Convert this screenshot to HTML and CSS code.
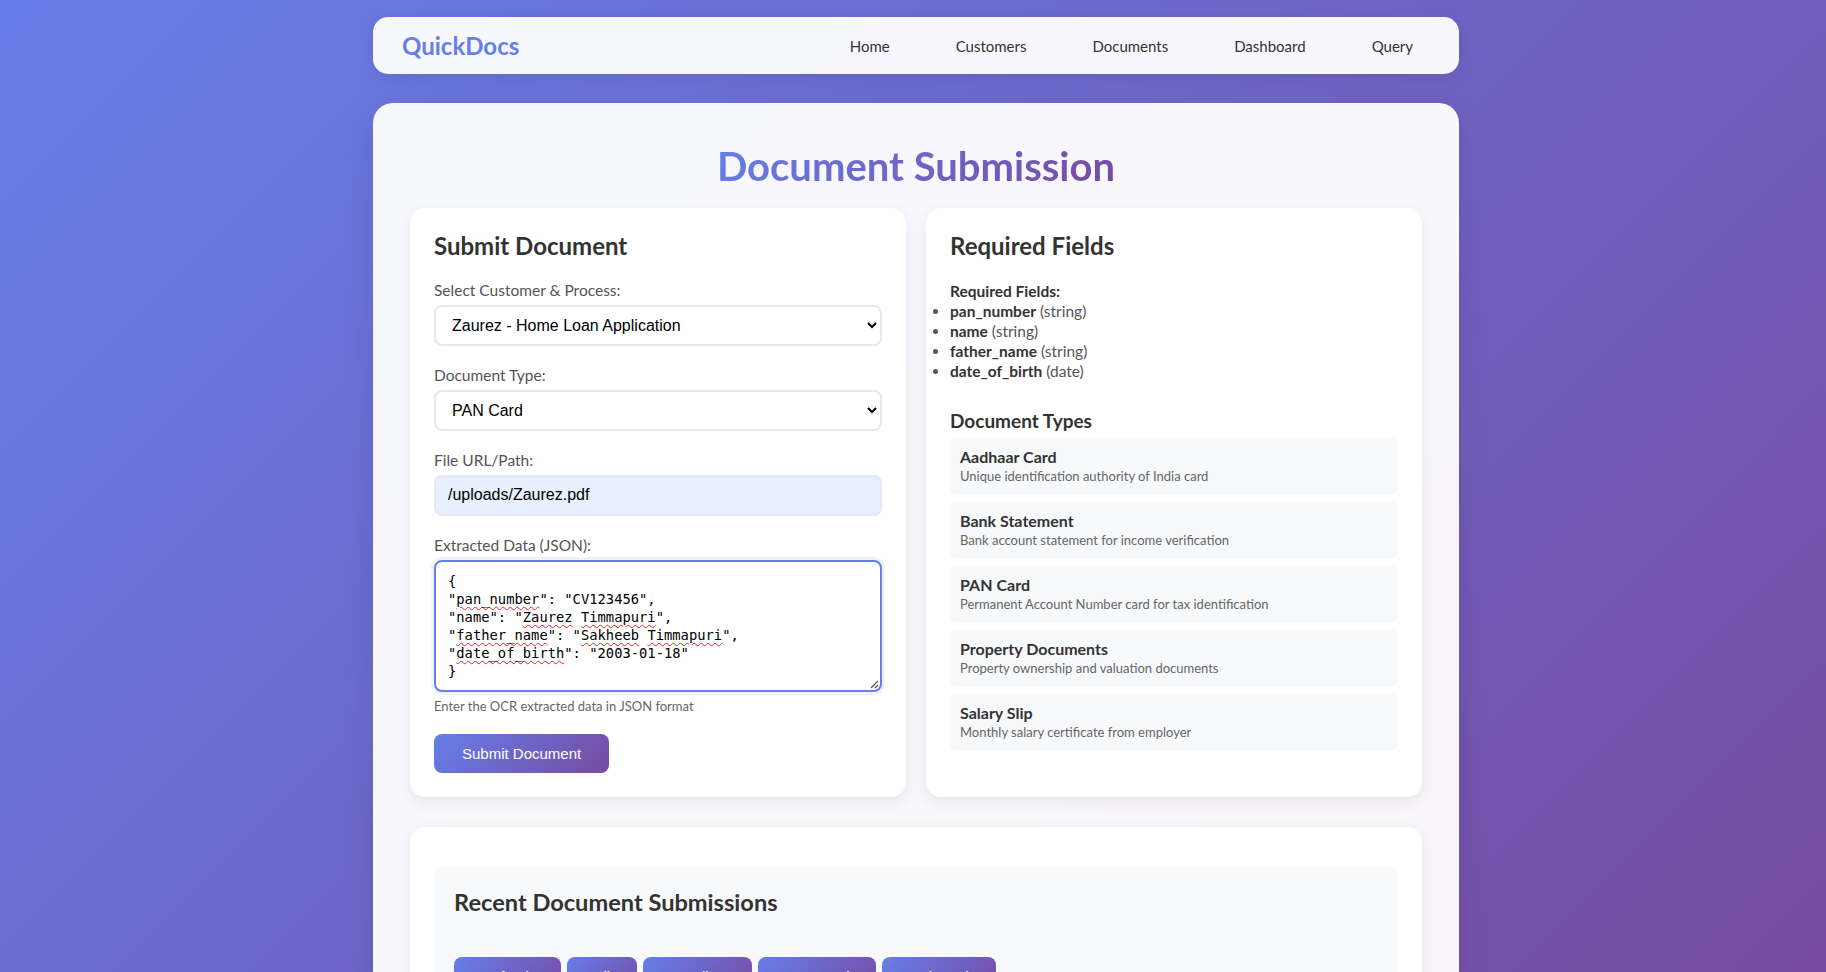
FILE: index.html
```html
<!DOCTYPE html>
<html lang="en">
<head>
<meta charset="utf-8">
<title>QuickDocs - Document Submission</title>
<link rel="stylesheet" href="styles.css">
</head>
<body>
<div class="container">
  <nav class="navbar">
    <div class="logo">QuickDocs</div>
    <ul class="nav-links">
      <li><a href="#">Home</a></li>
      <li><a href="#">Customers</a></li>
      <li><a href="#">Documents</a></li>
      <li><a href="#">Dashboard</a></li>
      <li><a href="#">Query</a></li>
    </ul>
  </nav>

  <main class="main-card">
    <h1 class="page-title">Document Submission</h1>

    <div class="two-col">
      <section class="card">
        <h2 class="card-title">Submit Document</h2>
        <form class="submit-form">
          <div class="form-group">
            <label class="form-label">Select Customer &amp; Process:</label>
            <select class="form-control"><option>Zaurez - Home Loan Application</option></select>
          </div>
          <div class="form-group">
            <label class="form-label">Document Type:</label>
            <select class="form-control"><option>PAN Card</option></select>
          </div>
          <div class="form-group">
            <label class="form-label">File URL/Path:</label>
            <input class="form-control autofilled" type="text" value="/uploads/Zaurez.pdf">
          </div>
          <div class="form-group">
            <label class="form-label">Extracted Data (JSON):</label>
            <div class="json-input" role="textbox" aria-multiline="true">{
"<span class="sp">pan_number</span>": "CV123456",
"name": "<span class="sp">Zaurez</span> <span class="sp">Timmapuri</span>",
"<span class="sp">father_name</span>": "<span class="sp">Sakheeb</span> <span class="sp">Timmapuri</span>",
"<span class="sp">date_of_birth</span>": "2003-01-18"
}<svg class="resize-grip" width="9" height="9" viewBox="0 0 9 9"><path d="M8 1 L1 8 M8 5 L5 8" stroke="#555" stroke-width="1.2" fill="none"/></svg></div>
            <small class="help">Enter the OCR extracted data in JSON format</small>
          </div>
          <button type="button" class="btn">Submit Document</button>
        </form>
      </section>

      <section class="card">
        <h2 class="card-title">Required Fields</h2>
        <div class="fields">
          <strong>Required Fields:</strong>
          <ul class="field-list">
            <li><strong>pan_number</strong> (string)</li>
            <li><strong>name</strong> (string)</li>
            <li><strong>father_name</strong> (string)</li>
            <li><strong>date_of_birth</strong> (date)</li>
          </ul>
        </div>
        <h3 class="sub-title">Document Types</h3>
        <div class="doc-types">
          <div class="doc-type"><div class="doc-name">Aadhaar Card</div><div class="doc-desc">Unique identification authority of India card</div></div>
          <div class="doc-type"><div class="doc-name">Bank Statement</div><div class="doc-desc">Bank account statement for income verification</div></div>
          <div class="doc-type"><div class="doc-name">PAN Card</div><div class="doc-desc">Permanent Account Number card for tax identification</div></div>
          <div class="doc-type"><div class="doc-name">Property Documents</div><div class="doc-desc">Property ownership and valuation documents</div></div>
          <div class="doc-type"><div class="doc-name">Salary Slip</div><div class="doc-desc">Monthly salary certificate from employer</div></div>
        </div>
      </section>
    </div>

    <section class="card recent">
      <div class="recent-inner">
        <h3 class="recent-title">Recent Document Submissions</h3>
        <div class="filter-bar">
          <button type="button" class="btn btn-filter">Refresh</button>
          <button type="button" class="btn btn-filter">All</button>
          <button type="button" class="btn btn-filter">Pending</button>
          <button type="button" class="btn btn-filter">Approved</button>
          <button type="button" class="btn btn-filter">Rejected</button>
        </div>
        <div class="submissions">
          <p class="empty">Loading submissions...</p>
        </div>
      </div>
    </section>
  </main>
</div>
</body>
</html>
```

FILE: styles.css
```css
* { box-sizing: border-box; }

html, body { margin: 0; padding: 0; }

body {
  font-family: Lato, "Open Sans", sans-serif;
  color: #333;
  min-height: 100vh;
  padding-left: 6px;
  background: linear-gradient(135deg, #667eea 0%, #764ba2 100%) fixed;
}

.container {
  max-width: 1086px;
  margin: 0 auto;
  padding: 17px 0 40px;
}

/* Navbar */
.navbar {
  height: 57px;
  display: flex;
  align-items: center;
  justify-content: space-between;
  padding: 0 30px 0 29px;
  background: rgba(255, 255, 255, 0.95);
  border-radius: 15px;
  box-shadow: 0 4px 20px rgba(0, 0, 0, 0.08);
}

.logo {
  font-size: 24px;
  font-weight: 700;
  color: #667eea;
}

.nav-links {
  list-style: none;
  display: flex;
  gap: 34px;
  margin: 0;
  padding: 0;
}

.nav-links a {
  display: block;
  padding: 8px 16px;
  font-size: 15px;
  color: #333;
  text-decoration: none;
}

/* Main card */
.main-card {
  margin-top: 29px;
  padding: 39px 37px 37px;
  background: rgba(255, 255, 255, 0.95);
  border-radius: 20px;
  box-shadow: 0 10px 30px rgba(0, 0, 0, 0.1);
}

.page-title {
  width: fit-content;
  margin: 0 auto 18px;
  font-size: 40px;
  line-height: 48px;
  font-weight: 700;
  background: linear-gradient(135deg, #667eea 0%, #764ba2 100%);
  -webkit-background-clip: text;
  background-clip: text;
  color: transparent;
}

.two-col {
  display: grid;
  grid-template-columns: 1fr 1fr;
  gap: 20px;
}

.card {
  background: #fff;
  border-radius: 15px;
  padding: 24px;
  box-shadow: 0 5px 15px rgba(0, 0, 0, 0.07);
}

.card-title {
  margin: 0 0 20px;
  font-size: 24px;
  line-height: 1.2;
  font-weight: 700;
  color: #333;
}

/* Form */
.form-group { margin-bottom: 20px; }

.form-label {
  display: block;
  margin-bottom: 5px;
  font-size: 15.5px;
  line-height: 19px;
  color: #555;
}

.form-control {
  display: block;
  width: 100%;
  height: 41px;
  padding: 0 12px;
  border: 2px solid #e6e8ec;
  border-radius: 8px;
  background: #fff;
  font-family: "Liberation Sans", Arial, sans-serif;
  font-size: 16px;
  color: #000;
}

.autofilled { background: #e8f0fe; border-color: #e3e8f2; }

.json-input {
  position: relative;
  height: 132px;
  padding: 10px 12px;
  border: 2px solid #667eea;
  border-radius: 8px;
  box-shadow: 0 0 0 3px rgba(102, 126, 234, 0.1);
  background: #fff;
  font-family: "DejaVu Sans Mono", "Liberation Mono", monospace;
  font-size: 13.8px;
  line-height: 18px;
  white-space: pre;
  color: #000;
  overflow: hidden;
}

.sp {
  text-decoration: underline wavy #e02424;
  text-decoration-thickness: 1px;
  text-underline-offset: 2px;
}

.resize-grip {
  position: absolute;
  right: 1px;
  bottom: 1px;
}

.help {
  display: block;
  margin-top: 7px;
  font-size: 13px;
  line-height: 1.2;
  color: #666;
}

.btn {
  height: 39px;
  padding: 0 28px;
  border: none;
  border-radius: 8px;
  background: linear-gradient(135deg, #667eea 0%, #764ba2 100%);
  color: #fff;
  font-family: "Liberation Sans", Arial, sans-serif;
  font-size: 15px;
  cursor: pointer;
}

.btn-filter { padding: 0 27px; }

/* Required fields */
.fields {
  margin-bottom: 29px;
  font-size: 15.5px;
  line-height: 20px;
  color: #555;
}

.fields strong { color: #333; font-weight: 700; }

.field-list {
  margin: 0;
  padding: 0;
  list-style: disc outside;
}

.sub-title {
  margin: 0 0 4px;
  font-size: 19px;
  line-height: 1.2;
  font-weight: 700;
  color: #333;
}

.doc-types {
  display: flex;
  flex-direction: column;
  gap: 6px;
}

.doc-type {
  padding: 10px;
  background: #f8f9fa;
  border-radius: 8px;
}

.doc-name {
  font-size: 16px;
  line-height: 20px;
  font-weight: 700;
  color: #333;
}

.doc-desc {
  margin-top: 1px;
  font-size: 13px;
  line-height: 17px;
  color: #666;
}

/* Recent submissions */
.recent {
  margin-top: 30px;
  padding: 40px 24px 24px;
}

.recent-inner {
  padding: 21px 20px 20px;
  background: #f8f9fa;
  border-radius: 10px;
}

.recent-title {
  margin: 0 0 40px;
  font-size: 23.6px;
  line-height: 1.2;
  font-weight: 700;
  color: #333;
}

.filter-bar {
  display: flex;
  gap: 6px;
}

.submissions { min-height: 200px; padding-top: 20px; }

.empty { margin: 0; color: #666; font-size: 15px; }
```
